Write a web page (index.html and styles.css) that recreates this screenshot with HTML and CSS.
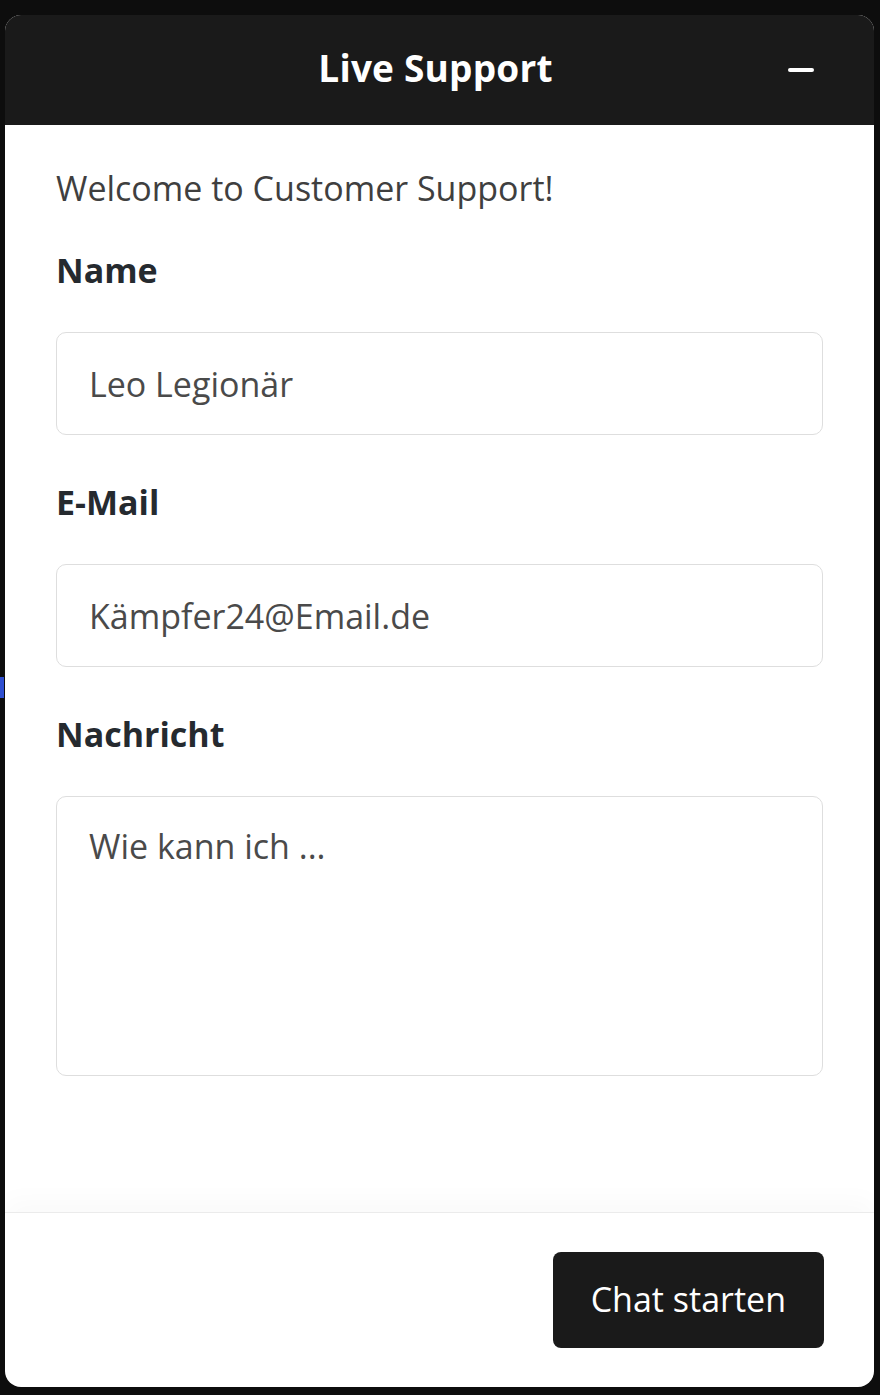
FILE: index.html
```html
<!DOCTYPE html>
<html lang="de">
<head>
    <meta charset="UTF-8">
    <meta name="viewport" content="width=device-width, initial-scale=1.0">
    <title>Live Support</title>
    <link rel="stylesheet" href="styles.css">
</head>
<body>
    <span class="edge-mark"></span>
    <div class="chat-widget">
        <div class="chat-header">
            <span></span>
            <h2>Live Support</h2>
            <button type="button" class="minimize" aria-label="Minimieren"><span></span></button>
        </div>
        <form id="chatForm" class="chat-body">
            <p class="welcome">Welcome to Customer Support!</p>

            <div class="field">
                <label for="name">Name</label>
                <input type="text" id="name" name="name" value="Leo Legionär">
            </div>

            <div class="field">
                <label for="email">E-Mail</label>
                <input type="text" id="email" name="email" value="Kämpfer24@Email.de">
            </div>

            <div class="field">
                <label for="message">Nachricht</label>
                <textarea id="message" name="message">Wie kann ich ...</textarea>
            </div>
        </form>
        <div class="chat-footer">
            <button type="submit" form="chatForm" class="start">Chat starten</button>
        </div>
    </div>
</body>
</html>
```

FILE: styles.css
```css
body {
    font-family: "Open Sans", "Noto Sans", sans-serif;
    margin: 0;
    padding: 15px 6px 8px 5px;
    height: 1395px;
    box-sizing: border-box;
    background-color: #0d0d0d;
    position: relative;
}
.edge-mark {
    position: absolute;
    left: 0;
    top: 677px;
    width: 4px;
    height: 21px;
    background: #2f4fd0;
}
.chat-widget {
    height: 100%;
    background: white;
    border-radius: 16px;
    overflow: hidden;
    display: flex;
    flex-direction: column;
}
.chat-header {
    height: 110px;
    flex-shrink: 0;
    box-sizing: border-box;
    background-color: #1a1a1a;
    display: grid;
    grid-template-columns: 1fr auto 1fr;
    align-items: center;
    padding: 0 60px 6px 52px;
}
.chat-header h2 {
    margin: 0;
    color: white;
    font-size: 37px;
    font-weight: 700;
    line-height: 51px;
    letter-spacing: 0.2px;
}
.minimize {
    justify-self: end;
    margin-top: 6px;
    background: none;
    border: none;
    padding: 10px 0;
    cursor: pointer;
}
.minimize span {
    display: block;
    width: 26px;
    height: 4px;
    border-radius: 2px;
    background: white;
}
.chat-body {
    flex: 1;
    padding: 38px 51px 0 51px;
}
.welcome {
    margin: 0 0 31px;
    font-size: 34px;
    line-height: 51px;
    color: #3f3f3f;
}
.field {
    margin-bottom: 42px;
}
label {
    display: block;
    font-size: 34px;
    line-height: 51px;
    font-weight: 700;
    color: #252a2f;
    margin-bottom: 36px;
}
input[type="text"],
textarea {
    display: block;
    width: 100%;
    box-sizing: border-box;
    border: 1px solid #dedede;
    border-radius: 10px;
    font-family: inherit;
    font-size: 34px;
    line-height: 51px;
    color: #4a4a4a;
    padding: 0 32px;
    margin: 0;
    outline: none;
}
input[type="text"] {
    height: 103px;
}
textarea {
    height: 280px;
    padding-top: 24px;
    resize: none;
}
.chat-footer {
    height: 175px;
    flex-shrink: 0;
    box-sizing: border-box;
    border-top: 1px solid #ebebeb;
    box-shadow: 0 -12px 24px rgba(0,0,0,0.025);
    display: flex;
    justify-content: flex-end;
    align-items: center;
    padding-right: 50px;
}
.start {
    background-color: #1a1a1a;
    color: white;
    font-family: inherit;
    font-size: 34px;
    line-height: 51px;
    padding: 22px 38px 23px;
    border: none;
    border-radius: 8px;
    cursor: pointer;
}
```
